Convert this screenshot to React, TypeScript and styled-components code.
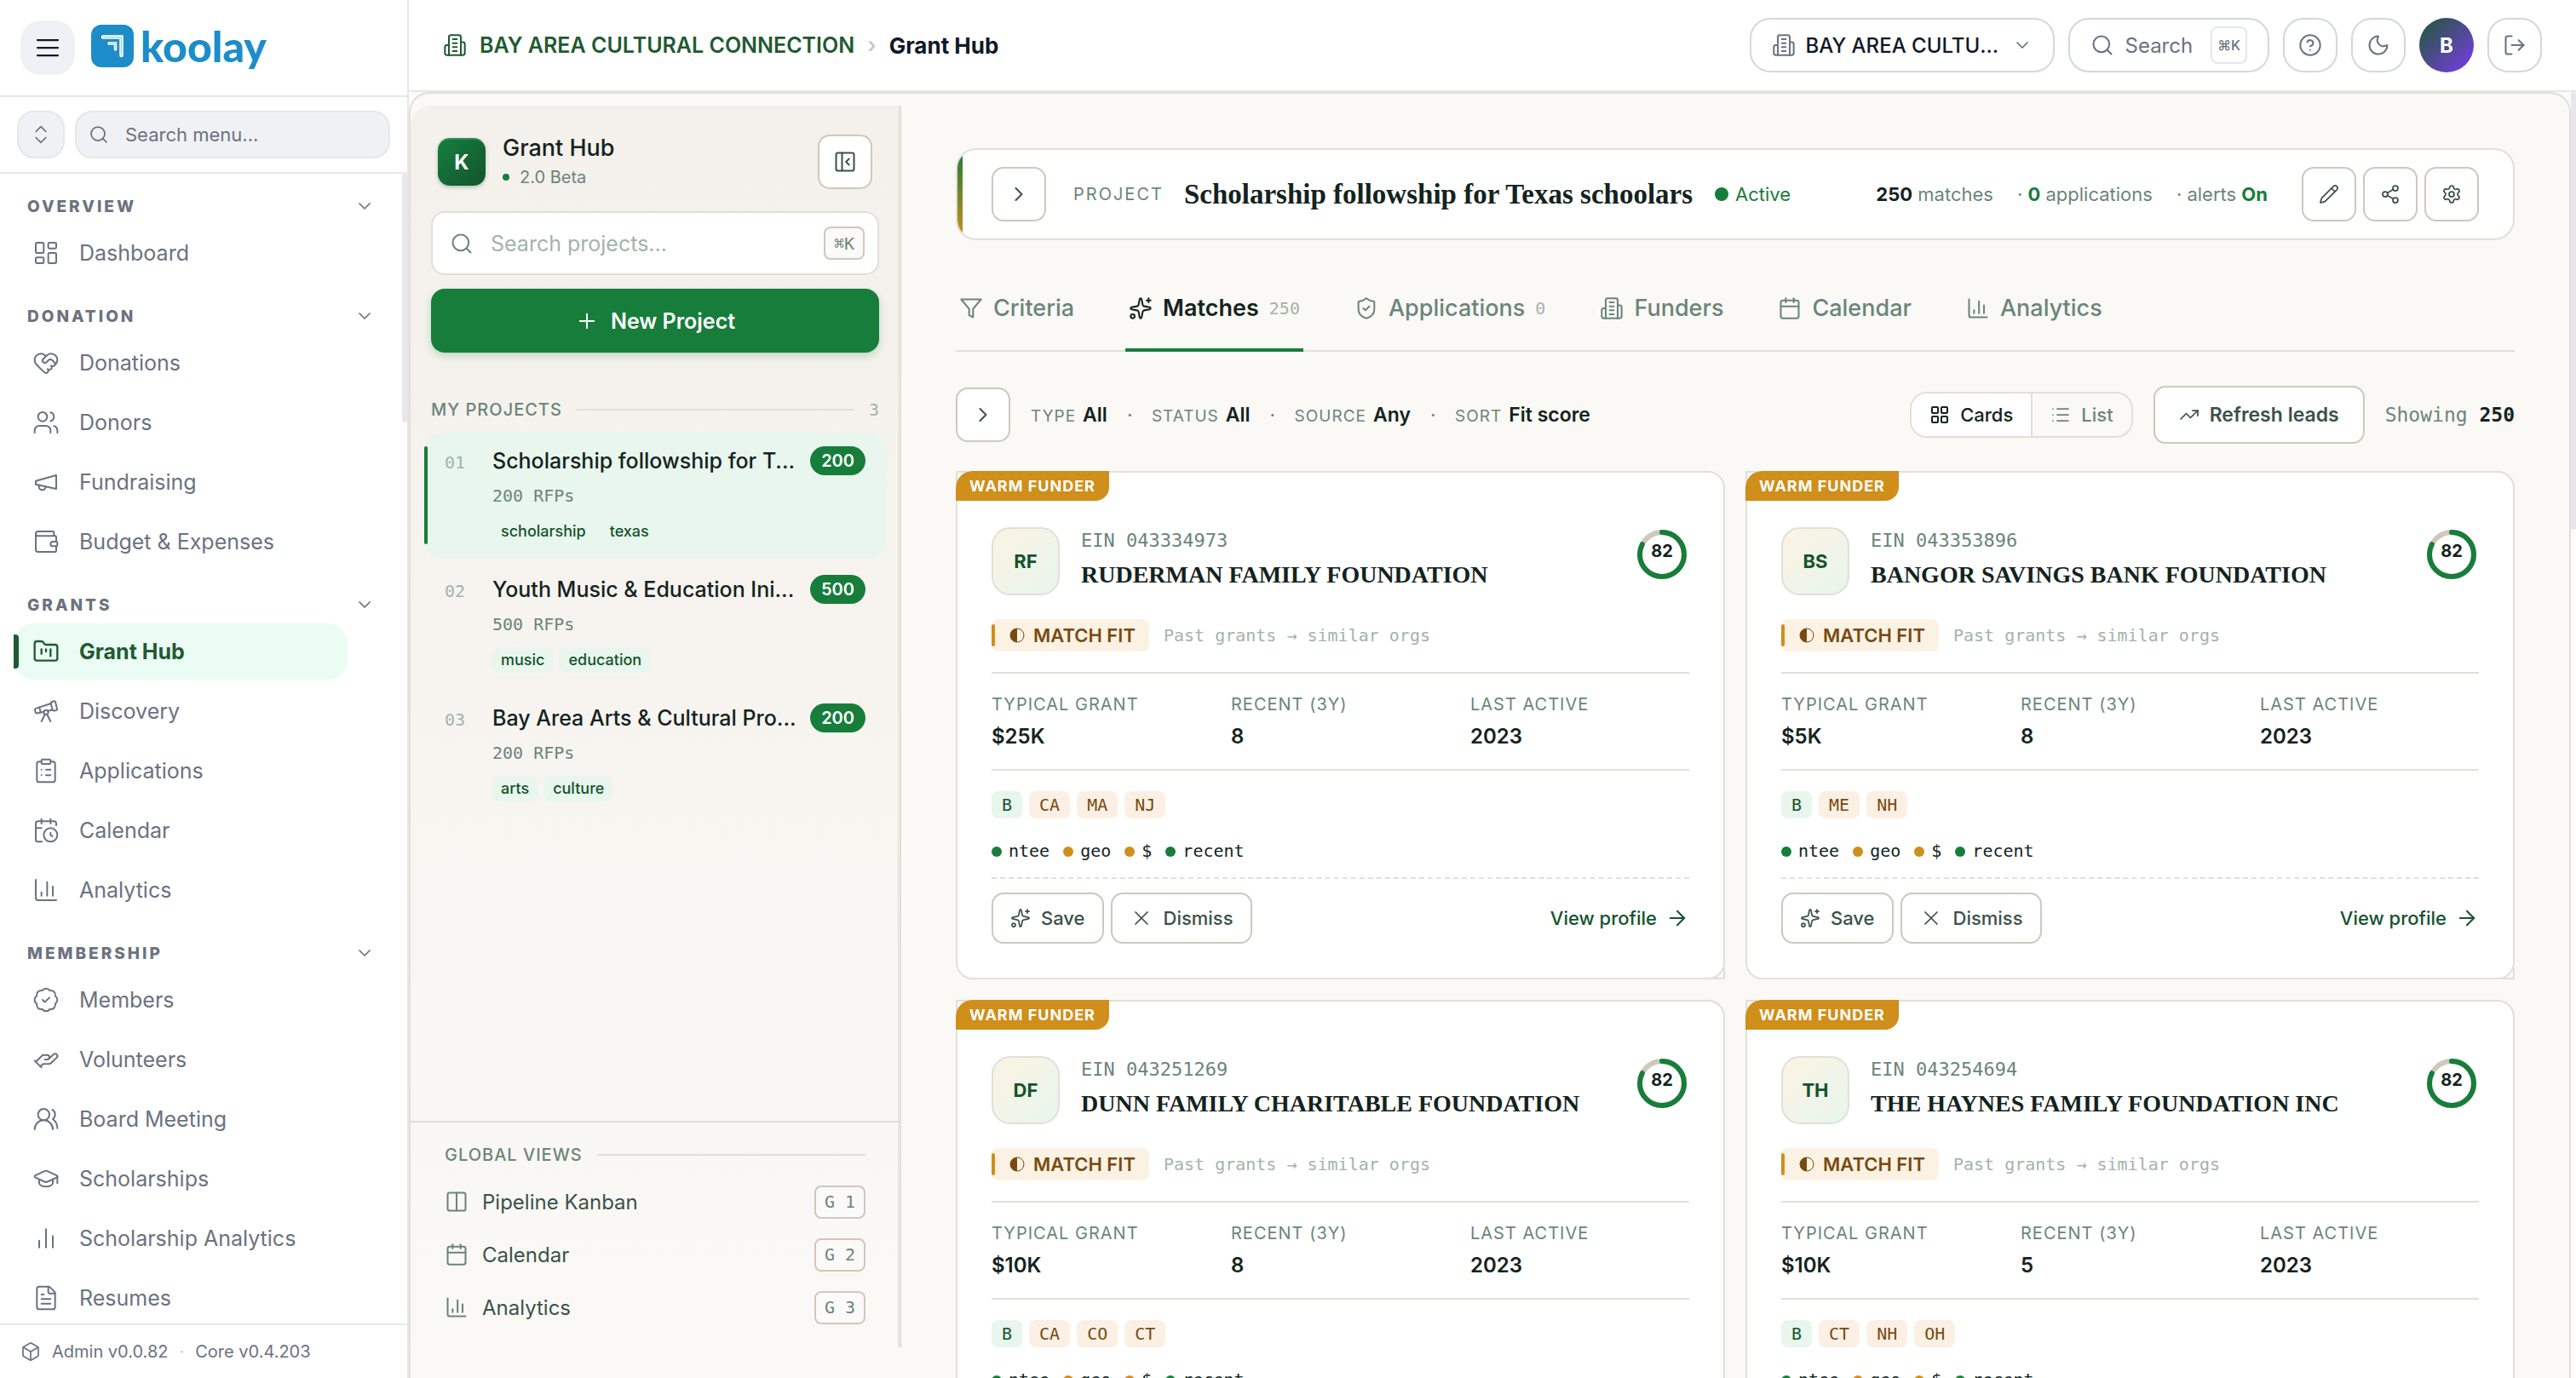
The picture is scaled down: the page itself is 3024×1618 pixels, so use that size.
import React from 'react';
import styled, { createGlobalStyle, css } from 'styled-components';
import {
  ChevronsUpDown, Search, ChevronDown, ChevronRight, LayoutDashboard, HeartHandshake, Users,
  Wallet, FolderKanban, Telescope, ClipboardList, CalendarClock, ChartColumn, BadgeCheck, HandHelping,
  UsersRound, GraduationCap, FileText, Box, CircleQuestionMark, Moon, LogOut,
  PanelLeftClose, Plus, Columns2, Calendar, Sparkles, ShieldCheck, LayoutGrid, List, TrendingUp,
  Pencil, Share2, Settings, X, ArrowRight,
} from 'lucide-react';

const c = {
  gray: '#6b7280',
  ink: '#111827',
  rule: '#e5e7eb',
  forest: '#14532d',
  brand: '#1f5a32',
  green: '#177d3b',
  mint: '#e8f6ed',
  text: '#14231d',
  body: '#3b5249',
  muted: '#6b857b',
  faint: '#a3b3ac',
  line: '#e2dfd8',
  edge: '#cfc8bd',
  paper: '#faf9f5',
  amber: '#d08e1b',
  cream: '#fcf2e4',
  brown: '#784a10',
};

const sans = `Inter, 'Liberation Sans', sans-serif`;
const mono = `'DejaVu Sans Mono', 'Liberation Mono', monospace`;
const serif = `'Liberation Serif', serif`;

const GlobalStyle = createGlobalStyle`
  *, *::before, *::after { box-sizing: border-box; }
  body { margin: 0; font-family: ${sans}; color: ${c.text}; background: ${c.paper}; }
  button, input, select { font: inherit; color: inherit; }
  button { cursor: pointer; padding: 0; background: none; border: 0; }
  a { color: inherit; text-decoration: none; }
  svg { flex: none; display: block; }
  h1, h2, h3, p, ul, ol, dl, dd { margin: 0; padding: 0; list-style: none; }
`;

/* ---------- icons that are drawn here ---------- */

type IconProps = { size?: number; strokeWidth?: number };

const Stroke = ({ size = 24, strokeWidth = 2, children }: IconProps & { children: React.ReactNode }) => (
  <svg width={size} height={size} viewBox="0 0 24 24" fill="none" stroke="currentColor"
    strokeWidth={strokeWidth} strokeLinecap="round" strokeLinejoin="round" aria-hidden="true">
    {children}
  </svg>
);

const Building = (p: IconProps) => (
  <Stroke {...p}>
    <path d="M6 22V4a2 2 0 0 1 2-2h8a2 2 0 0 1 2 2v18Z" />
    <path d="M6 12H4a2 2 0 0 0-2 2v6a2 2 0 0 0 2 2h2" />
    <path d="M18 9h2a2 2 0 0 1 2 2v9a2 2 0 0 1-2 2h-2" />
    <path d="M10 6h4M10 10h4M10 14h4M10 18h4" />
  </Stroke>
);

const Horn = (p: IconProps) => (
  <Stroke {...p}>
    <path d="m3 11 18-5v12L3 14v-3z" />
    <path d="M11.6 16.8a3 3 0 1 1-5.8-1.6" />
  </Stroke>
);

const Funnel = (p: IconProps) => (
  <Stroke {...p}>
    <polygon points="22 3 2 3 10 12.46 10 19 14 21 14 12.46 22 3" />
  </Stroke>
);

const Bars = (p: IconProps) => (
  <Stroke {...p}>
    <path d="M18 20V10M12 20V4M6 20v-6" />
  </Stroke>
);

const Burger = (p: IconProps) => (
  <Stroke {...p}>
    <path d="M4 6h16M4 12h16M4 18h16" />
  </Stroke>
);

const HalfMoon = () => (
  <svg width="18" height="18" viewBox="0 0 18 18" aria-hidden="true">
    <circle cx="9" cy="9" r="8" fill="none" stroke="currentColor" strokeWidth="1" />
    <path d="M9 1a8 8 0 0 0 0 16z" fill="currentColor" />
  </svg>
);

const LogoMark = () => (
  <svg width="50" height="50" viewBox="0 0 50 50" aria-hidden="true">
    <rect width="50" height="50" rx="12" fill="#1d8dc9" />
    <path d="M14 14.500H35.500V36" fill="none" stroke="#fff" strokeWidth="4.500" strokeLinecap="round" />
    <path d="M15 14.700H35.300V35" fill="none" stroke="#7fc0e4" strokeWidth="1" />
    <path d="M21 22H28.500V29" fill="none" stroke="#fff" strokeWidth="3.500" strokeLinecap="round" />
    <path d="M22 22H28.500V28.500" fill="none" stroke="#7fc0e4" strokeWidth="0.800" />
  </svg>
);

/* ---------- shell ---------- */

const Shell = styled.div`
  display: flex;
  height: 100vh;
  overflow: hidden;
`;

const Sidebar = styled.aside`
  flex: none;
  width: 480px;
  display: flex;
  flex-direction: column;
  background: #fff;
  border-right: 2px solid ${c.rule};
  color: ${c.gray};
`;

const Brand = styled.div`
  display: flex;
  align-items: center;
  height: 114px;
  padding: 0 24px;
  border-bottom: 2px solid ${c.rule};
`;

const MenuButton = styled.button`
  width: 64px;
  height: 64px;
  border-radius: 24px;
  background: #f0f1f5;
  color: ${c.ink};
  display: grid;
  place-items: center;
`;

const Logo = styled.a`
  display: flex;
  align-items: center;
  gap: 8px;
  margin-left: 19px;
  padding-bottom: 4px;
  font: 900 50px/56px Lato, sans-serif;
  color: #1d8dc9;
`;

const MenuSearchRow = styled.div`
  display: flex;
  gap: 12px;
  padding: 16px 20px;
  border-bottom: 2px solid ${c.rule};
`;

const ExpandButton = styled.button`
  flex: none;
  width: 56px;
  height: 56px;
  border: 2px solid ${c.rule};
  border-radius: 20px;
  background: #f0f1f5;
  display: grid;
  place-items: center;
`;

const MenuSearch = styled.label`
  flex: 1;
  min-width: 0;
  display: flex;
  align-items: center;
  gap: 19px;
  height: 56px;
  padding: 0 14px;
  border: 2px solid ${c.rule};
  border-radius: 20px;
  background: #f0f1f5;
`;

const BareInput = styled.input<{ $size: number; $hint: string }>`
  flex: 1;
  min-width: 0;
  border: 0;
  padding: 0;
  outline: 0;
  background: none;
  font-size: ${(p) => p.$size}px;
  &::placeholder { color: ${(p) => p.$hint}; opacity: 1; }
`;

const NavArea = styled.nav`
  position: relative;
  flex: 1;
  min-height: 0;
  overflow: hidden;
  padding: 18px 16px 0;
`;

const NavThumb = styled.span`
  position: absolute;
  top: 0;
  right: 0;
  width: 6px;
  height: 292px;
  border-radius: 3px;
  background: ${c.rule};
`;

const NavGroup = styled.section`
  & + & { margin-top: 21px; }
`;

const GroupToggle = styled.button`
  display: flex;
  align-items: center;
  justify-content: space-between;
  width: 100%;
  height: 40px;
  margin-bottom: 2px;
  padding: 0 22px 0 16px;
  font-size: 19px;
  font-weight: 800;
  letter-spacing: 3px;
`;

const NavList = styled.ul`
  display: grid;
  gap: 4px;
  padding-right: 54px;
`;

const NavLink = styled.a<{ $active?: boolean }>`
  display: flex;
  align-items: center;
  gap: 23px;
  height: 66px;
  padding-left: 22px;
  font-size: 25px;
  white-space: nowrap;
  ${(p) => p.$active && css`
    position: relative;
    border-radius: 24px;
    background: #eafcf4;
    color: ${c.brand};
    font-weight: 700;
    &::before {
      content: '';
      position: absolute;
      left: 0;
      top: 13px;
      bottom: 13px;
      width: 6px;
      border-radius: 0 4px 4px 0;
      background: ${c.brand};
    }
  `}
`;

const SideFooter = styled.footer`
  display: flex;
  align-items: center;
  gap: 13px;
  height: 64px;
  padding: 0 24px;
  border-top: 2px solid ${c.rule};
  font-size: 20px;
`;

const Soft = styled.span`
  color: #c3c8d0;
`;

const Page = styled.div`
  flex: 1;
  min-width: 0;
  display: flex;
  flex-direction: column;
`;

/* ---------- top bar ---------- */

const TopBar = styled.header`
  flex: none;
  display: flex;
  align-items: center;
  justify-content: space-between;
  height: 108px;
  padding: 0 40px;
  background: #fff;
  border-bottom: 2px solid ${c.rule};
`;

const Crumbs = styled.nav`
  display: flex;
  align-items: center;
  gap: 15px;
  font-size: 25px;
  font-weight: 600;
  color: ${c.brand};
`;

const CrumbHere = styled.span`
  font-size: 26px;
  font-weight: 700;
  color: ${c.ink};
`;

const TopActions = styled.div`
  display: flex;
  align-items: center;
  gap: 16px;
  color: ${c.gray};
`;

const pill = css`
  display: flex;
  align-items: center;
  height: 64px;
  border: 2px solid #d3d7e2;
  border-radius: 24px;
  background: #fff;
`;

const OrgPicker = styled.label`
  ${pill}
  padding: 0 24px;
  gap: 12px;
`;

const OrgSelect = styled.select`
  appearance: none;
  width: 230px;
  padding: 0;
  border: 0;
  background: none;
  color: ${c.ink};
  font-size: 24px;
  font-weight: 500;
  overflow: hidden;
  text-overflow: ellipsis;
  white-space: nowrap;
`;

const SearchButton = styled.button`
  ${pill}
  padding: 0 24px;
  gap: 13px;
  font-size: 24px;
`;

const Keys = styled.kbd<{ $tone: 'cool' | 'warm' }>`
  display: grid;
  place-items: center;
  border-radius: 8px;
  white-space: pre;
  ${(p) => p.$tone === 'cool'
    ? css`height: 44px; margin-left: 8px; padding: 0 6px; border: 2px solid ${c.rule}; font: 500 16px ${sans};`
    : css`height: 39px; padding: 0 10px; border: 2px solid ${c.edge}; font: 20px ${mono}; color: ${c.muted}; background: #fcfaf8;`}
`;

const RoundButton = styled.button`
  ${pill}
  width: 64px;
  justify-content: center;
`;

const Avatar = styled.button`
  width: 64px;
  height: 64px;
  border-radius: 50%;
  background: linear-gradient(135deg, #1f5a32, #7c3aed);
  color: #fff;
  font-size: 24px;
  font-weight: 700;
`;

/* ---------- framed workspace ---------- */

const Workspace = styled.div`
  flex: 1;
  min-height: 0;
  display: flex;
  background: #fbfbf9;
`;

const Frame = styled.div`
  flex: 1;
  min-width: 0;
  display: flex;
  overflow: hidden;
  border: 2px solid ${c.line};
  border-bottom: 0;
  border-radius: 24px 24px 0 0;
  background: ${c.paper};
`;

const PageThumb = styled.div`
  width: 6px;
  height: 514px;
  border-radius: 3px;
  background: ${c.rule};
`;

const Panel = styled.aside`
  flex: none;
  width: 576px;
  margin: 14px 0 36px;
  display: flex;
  flex-direction: column;
  justify-content: space-between;
  border-right: 2px solid ${c.line};
  border-radius: 24px 0 0 0;
  box-shadow: inset -2px 0 0 #ebe8e2;
  background: linear-gradient(180deg, #f4f0eb, ${c.paper});
`;

const PanelTop = styled.div`
  padding: 34px 24px 0;
`;

const PanelHead = styled.div`
  display: flex;
  align-items: center;
  gap: 20px;
  padding: 0 8px;
`;

const KBadge = styled.span`
  display: grid;
  place-items: center;
  width: 56px;
  height: 56px;
  border-radius: 14px;
  background: linear-gradient(135deg, #15803d, #14532d);
  box-shadow: inset 0 2px 0 rgba(255, 255, 255, 0.15), 0 2px 4px rgba(20, 83, 45, 0.3);
  color: #fff;
  font-size: 24px;
  font-weight: 700;
`;

const PanelTitle = styled.h2`
  font-size: 27px;
  line-height: 32px;
  font-weight: 500;
`;

const Beta = styled.p`
  display: flex;
  align-items: center;
  gap: 12px;
  margin-top: 4px;
  font-size: 20px;
  line-height: 28px;
  color: ${c.muted};
`;

const Dot = styled.i<{ $size: number; $amber?: boolean }>`
  flex: none;
  width: ${(p) => p.$size}px;
  height: ${(p) => p.$size}px;
  border-radius: 50%;
  background: ${(p) => (p.$amber ? c.amber : c.green)};
`;

const SquareButton = styled.button<{ $end?: boolean }>`
  flex: none;
  display: grid;
  place-items: center;
  width: 64px;
  height: 64px;
  border: 2px solid ${c.edge};
  border-radius: 14px;
  background: #fff;
  color: ${c.body};
  ${(p) => p.$end && css`margin-left: auto;`}
`;

const ProjectSearch = styled.label`
  display: flex;
  align-items: center;
  gap: 20px;
  height: 75px;
  margin-top: 26px;
  padding: 0 15px 0 20px;
  border: 2px solid ${c.line};
  border-radius: 16px;
  background: #fff;
  color: ${c.muted};
`;

const NewProject = styled.button`
  display: flex;
  align-items: center;
  justify-content: center;
  gap: 14px;
  width: 100%;
  height: 75px;
  margin-top: 16px;
  border-radius: 16px;
  background: ${c.green};
  box-shadow: 0 4px 10px rgba(21, 128, 61, 0.25);
  color: #fff;
  font-size: 25px;
  font-weight: 600;
`;

const Caption = styled.h3<{ $top?: boolean }>`
  display: flex;
  align-items: center;
  gap: 17px;
  font-size: 20px;
  line-height: 28px;
  font-weight: 500;
  letter-spacing: 1px;
  color: ${c.muted};
  ${(p) => p.$top && css`margin: 53px 0 13px;`}
  &::after {
    content: '';
    order: 1;
    flex: 1;
    height: 2px;
    background: ${c.line};
  }
`;

const Count = styled.span`
  order: 2;
  font: 20px/28px ${mono};
  letter-spacing: 0;
  color: ${c.faint};
`;

const ProjectList = styled.ol`
  display: grid;
  gap: 4px;
  margin: 0 -8px;
`;

const ProjectRow = styled.li<{ $active?: boolean }>`
  display: grid;
  grid-template-columns: 56px minmax(0, 1fr);
  padding: 16px 24px;
  border-radius: 20px;
  ${(p) => p.$active && css`
    position: relative;
    background: ${c.mint};
    &::before {
      content: '';
      position: absolute;
      left: 0;
      top: 16px;
      bottom: 16px;
      width: 4px;
      border-radius: 2px;
      background: ${c.green};
    }
  `}
`;

const Index = styled.span`
  font: 20px/38px ${mono};
  color: ${c.faint};
`;

const RowHead = styled.div`
  display: flex;
  align-items: center;
  justify-content: space-between;
`;

const RowTitle = styled.a`
  white-space: nowrap;
  font-size: 25px;
  line-height: 34px;
  font-weight: 500;
`;

const CountPill = styled.span`
  padding: 0 13px;
  border-radius: 17px;
  background: ${c.green};
  color: #fff;
  font-size: 20px;
  line-height: 34px;
  font-weight: 600;
`;

const RowMeta = styled.p`
  margin: 10px 0 13px;
  font: 20px/28px ${mono};
  color: ${c.muted};
`;

const TopicTags = styled.div`
  display: flex;
  gap: 8px;
`;

const TopicTag = styled.span`
  padding: 0 10px;
  border-radius: 8px;
  background: ${c.mint};
  color: ${c.forest};
  font-size: 18px;
  line-height: 30px;
  font-weight: 500;
`;

const GlobalViews = styled.nav`
  padding: 24px 40px 16px;
  border-top: 2px solid ${c.line};
`;

const ViewList = styled.ul`
  margin-top: 10px;
`;

const ViewLink = styled.a`
  display: flex;
  align-items: center;
  gap: 16px;
  height: 62px;
  font-size: 24px;
  color: ${c.body};
  svg { color: ${c.muted}; }
  kbd { margin-left: auto; }
`;

/* ---------- main column ---------- */

const Main = styled.main`
  flex: 1;
  min-width: 0;
  padding: 64px 64px 0;
`;

const ProjectBar = styled.section`
  position: relative;
  display: flex;
  align-items: center;
  height: 108px;
  padding: 0 40px;
  overflow: hidden;
  border: 2px solid ${c.line};
  border-radius: 24px;
  background: #fff;
  &::before {
    content: '';
    position: absolute;
    inset: 0 auto 0 0;
    width: 6px;
    background: linear-gradient(180deg, ${c.green}, ${c.amber});
  }
`;

const Kicker = styled.span`
  margin: 0 24px 0 32px;
  font-size: 20px;
  letter-spacing: 2px;
  color: ${c.muted};
`;

const ProjectTitle = styled.h1`
  font: 700 33px/40px ${serif};
`;

const Status = styled.span`
  display: flex;
  align-items: center;
  gap: 8px;
  margin-left: 26px;
  font-size: 22px;
  color: ${c.green};
`;

const Facts = styled.p`
  display: flex;
  gap: 28px;
  margin-left: auto;
  font-size: 22px;
  color: ${c.muted};
`;

const Strong = styled.strong<{ $green?: boolean }>`
  font-weight: 700;
  color: ${(p) => (p.$green ? c.green : c.text)};
`;

const ButtonSet = styled.div`
  display: flex;
  gap: 8px;
  margin-left: 40px;
`;

const Tabs = styled.nav`
  display: flex;
  gap: 56px;
  margin-top: 28px;
  border-bottom: 2px solid ${c.line};
`;

const Tab = styled.a<{ $active?: boolean }>`
  display: flex;
  align-items: center;
  gap: 12px;
  height: 103px;
  margin-bottom: -2px;
  padding: 4px 4px 0;
  border-bottom: 4px solid ${(p) => (p.$active ? c.green : 'transparent')};
  font-size: 27px;
  font-weight: ${(p) => (p.$active ? 600 : 500)};
  color: ${(p) => (p.$active ? c.text : c.muted)};
`;

const TabCount = styled.span`
  font: 20px ${mono};
  color: ${c.faint};
`;

const FilterRow = styled.div`
  display: flex;
  align-items: center;
  height: 68px;
  margin-top: 40px;
`;

const Filters = styled.dl`
  display: flex;
  gap: 52px;
  margin-left: 24px;
`;

const FilterItem = styled.div`
  position: relative;
  display: flex;
  align-items: baseline;
  gap: 8px;
  font-size: 23px;
  & + &::before {
    content: '·';
    position: absolute;
    left: -29px;
    color: ${c.muted};
  }
  dt { font-size: 19px; letter-spacing: 1px; color: ${c.muted}; }
  dd { font-weight: 600; }
`;

const ViewSwitch = styled.div`
  display: flex;
  height: 54px;
  margin-left: auto;
  overflow: hidden;
  border: 2px solid ${c.line};
  border-radius: 20px;
`;

const SwitchButton = styled.button<{ $on?: boolean }>`
  display: flex;
  align-items: center;
  gap: 12px;
  padding: 0 21px;
  font-size: 22px;
  font-weight: 500;
  color: ${(p) => (p.$on ? c.text : c.muted)};
  ${(p) => p.$on && css`background: #fff; border-right: 2px solid ${c.line};`}
`;

const Refresh = styled.button`
  display: flex;
  align-items: center;
  gap: 12px;
  height: 68px;
  margin: 0 24px;
  padding: 0 28px;
  border: 2px solid ${c.edge};
  border-radius: 14px;
  background: #fff;
  color: ${c.body};
  font-size: 23px;
  font-weight: 600;
`;

const Showing = styled.p`
  font: 23px ${mono};
  color: ${c.muted};
`;

const Grid = styled.div`
  display: grid;
  grid-template-columns: repeat(2, minmax(0, 1fr));
  gap: 24px;
  margin-top: 32px;
`;

/* ---------- funder card ---------- */

const Card = styled.article`
  position: relative;
  z-index: 0;
  padding: 64px 40px 40px;
  border: 2px solid ${c.line};
  border-radius: 20px;
  background: #fff;
  &::before, &::after {
    content: '';
    position: absolute;
    z-index: -1;
    width: 14px;
    height: 14px;
    border: 0 solid ${c.line};
  }
  &::before { left: -2px; top: -2px; border-width: 2px 0 0 2px; }
  &::after { right: -2px; bottom: -2px; border-width: 0 2px 2px 0; }
`;

const Ribbon = styled.span`
  position: absolute;
  left: -2px;
  top: -2px;
  padding: 0 16px;
  border-radius: 20px 0 16px 0;
  background: ${c.amber};
  color: #fff;
  font-size: 18px;
  line-height: 35px;
  font-weight: 700;
  letter-spacing: 1px;
`;

const CardHead = styled.header`
  display: flex;
  gap: 25px;
`;

const Monogram = styled.span`
  flex: none;
  display: grid;
  place-items: center;
  width: 80px;
  height: 80px;
  border: 2px solid ${c.line};
  border-radius: 22px;
  background: linear-gradient(135deg, #fbf3e3, #e8f6ed);
  color: ${c.forest};
  font-size: 22px;
  font-weight: 700;
`;

const Identity = styled.div`
  flex: 1;
  min-width: 0;
`;

const Ein = styled.p`
  font: 22px/32px ${mono};
  color: ${c.muted};
`;

const FunderName = styled.h2`
  margin-top: 4px;
  font: 700 28px/40px ${serif};
`;

const Score = styled.div`
  display: grid;
  flex: none;
  width: 64px;
  height: 64px;
  > * { grid-area: 1 / 1; }
`;

const ScoreValue = styled.span`
  text-align: center;
  font-size: 20px;
  line-height: 56px;
  font-weight: 700;
`;

const FitRow = styled.div`
  display: flex;
  align-items: center;
  gap: 17px;
  margin: 28px 0 24px;
`;

const FitTag = styled.span`
  position: relative;
  display: flex;
  align-items: center;
  gap: 10px;
  height: 38px;
  padding: 0 16px 0 21px;
  border-radius: 8px;
  background: ${c.cream};
  color: ${c.brown};
  font-size: 22px;
  font-weight: 600;
  &::before {
    content: '';
    position: absolute;
    left: 0;
    top: 6px;
    bottom: 6px;
    width: 4px;
    border-radius: 2px;
    background: ${c.amber};
  }
`;

const FitNote = styled.span`
  font: 20px ${mono};
  color: ${c.faint};
`;

const Stats = styled.dl`
  display: grid;
  grid-template-columns: repeat(3, minmax(0, 1fr));
  column-gap: 24px;
  padding: 22px 0 20px;
  border: solid ${c.line};
  border-width: 2px 0;
  dt { font-size: 20px; line-height: 28px; letter-spacing: 1px; color: ${c.muted}; }
  dd { margin-top: 6px; font-size: 24px; line-height: 36px; font-weight: 600; }
`;

const Codes = styled.div`
  display: flex;
  gap: 8px;
  margin: 24px 0;
`;

const Code = styled.span<{ $green?: boolean }>`
  padding: 0 12px;
  border-radius: 8px;
  background: ${(p) => (p.$green ? c.mint : '#fcf0e4')};
  color: ${(p) => (p.$green ? c.forest : c.brown)};
  font: 20px/32px ${mono};
`;

const Signals = styled.ul`
  display: flex;
  gap: 16px;
  padding-bottom: 16px;
  border-bottom: 2px dashed ${c.line};
  font: 20px/29px ${mono};
  li { display: flex; align-items: center; gap: 8px; }
`;

const Actions = styled.footer`
  display: flex;
  align-items: center;
  gap: 8px;
  padding-top: 16px;
`;

const ActionButton = styled.button`
  display: flex;
  align-items: center;
  gap: 12px;
  height: 60px;
  padding: 0 20px;
  border: 2px solid ${c.edge};
  border-radius: 14px;
  background: #fff;
  color: ${c.body};
  font-size: 22px;
  font-weight: 500;
`;

const ProfileLink = styled.a`
  display: flex;
  align-items: center;
  gap: 10px;
  margin-left: auto;
  color: ${c.forest};
  font-size: 22px;
  font-weight: 500;
`;

/* ---------- data ---------- */

type NavEntry = { label: string; icon: React.ElementType; active?: boolean };

const groups: { title: string; items: NavEntry[] }[] = [
  { title: 'OVERVIEW', items: [{ label: 'Dashboard', icon: LayoutDashboard }] },
  {
    title: 'DONATION',
    items: [
      { label: 'Donations', icon: HeartHandshake },
      { label: 'Donors', icon: Users },
      { label: 'Fundraising', icon: Horn },
      { label: 'Budget & Expenses', icon: Wallet },
    ],
  },
  {
    title: 'GRANTS',
    items: [
      { label: 'Grant Hub', icon: FolderKanban, active: true },
      { label: 'Discovery', icon: Telescope },
      { label: 'Applications', icon: ClipboardList },
      { label: 'Calendar', icon: CalendarClock },
      { label: 'Analytics', icon: ChartColumn },
    ],
  },
  {
    title: 'MEMBERSHIP',
    items: [
      { label: 'Members', icon: BadgeCheck },
      { label: 'Volunteers', icon: HandHelping },
      { label: 'Board Meeting', icon: UsersRound },
      { label: 'Scholarships', icon: GraduationCap },
      { label: 'Scholarship Analytics', icon: Bars },
      { label: 'Resumes', icon: FileText },
    ],
  },
];

const projects = [
  { title: 'Scholarship followship for T...', count: 200, tags: ['scholarship', 'texas'], active: true },
  { title: 'Youth Music & Education Ini...', count: 500, tags: ['music', 'education'] },
  { title: 'Bay Area Arts & Cultural Pro...', count: 200, tags: ['arts', 'culture'] },
];

const views = [
  { label: 'Pipeline Kanban', icon: Columns2, keys: 'G 1' },
  { label: 'Calendar', icon: Calendar, keys: 'G 2' },
  { label: 'Analytics', icon: ChartColumn, keys: 'G 3' },
];

const tabs = [
  { label: 'Criteria', icon: Funnel },
  { label: 'Matches', icon: Sparkles, count: 250, active: true },
  { label: 'Applications', icon: ShieldCheck, count: 0 },
  { label: 'Funders', icon: Building },
  { label: 'Calendar', icon: Calendar },
  { label: 'Analytics', icon: ChartColumn },
];

const filters = [['TYPE', 'All'], ['STATUS', 'All'], ['SOURCE', 'Any'], ['SORT', 'Fit score']];

const funders = [
  { mono: 'RF', ein: '043334973', name: 'RUDERMAN FAMILY FOUNDATION', grant: '$25K', recent: 8, states: ['CA', 'MA', 'NJ'] },
  { mono: 'BS', ein: '043353896', name: 'BANGOR SAVINGS BANK FOUNDATION', grant: '$5K', recent: 8, states: ['ME', 'NH'] },
  { mono: 'DF', ein: '043251269', name: 'DUNN FAMILY CHARITABLE FOUNDATION', grant: '$10K', recent: 8, states: ['CA', 'CO', 'CT'] },
  { mono: 'TH', ein: '043254694', name: 'THE HAYNES FAMILY FOUNDATION INC', grant: '$10K', recent: 5, states: ['CT', 'NH', 'OH'] },
];

const signals = [
  { label: 'ntee' },
  { label: 'geo', amber: true },
  { label: '$', amber: true },
  { label: 'recent' },
];

/* ---------- parts ---------- */

const ScoreRing = ({ value }: { value: number }) => {
  const length = 2 * Math.PI * 26;
  return (
    <Score>
      <svg width="64" height="64" viewBox="0 0 64 64" fill="none" strokeWidth="6" aria-hidden="true">
        <circle cx="32" cy="32" r="26" stroke={c.edge} />
        <circle cx="32" cy="32" r="26" stroke={c.green} strokeLinecap="round"
          strokeDasharray={`${(length * value) / 100} ${length}`} transform="rotate(-90 32 32)" />
      </svg>
      <ScoreValue>{value}</ScoreValue>
    </Score>
  );
};

const FunderCard = ({ funder }: { funder: (typeof funders)[number] }) => (
  <Card>
    <Ribbon>WARM FUNDER</Ribbon>
    <CardHead>
      <Monogram>{funder.mono}</Monogram>
      <Identity>
        <Ein>EIN {funder.ein}</Ein>
        <FunderName>{funder.name}</FunderName>
      </Identity>
      <ScoreRing value={82} />
    </CardHead>
    <FitRow>
      <FitTag><HalfMoon />MATCH FIT</FitTag>
      <FitNote>Past grants → similar orgs</FitNote>
    </FitRow>
    <Stats>
      <div><dt>TYPICAL GRANT</dt><dd>{funder.grant}</dd></div>
      <div><dt>RECENT (3Y)</dt><dd>{funder.recent}</dd></div>
      <div><dt>LAST ACTIVE</dt><dd>2023</dd></div>
    </Stats>
    <Codes>
      <Code $green>B</Code>
      {funder.states.map((s) => <Code key={s}>{s}</Code>)}
    </Codes>
    <Signals>
      {signals.map((s) => <li key={s.label}><Dot $size={12} $amber={s.amber} />{s.label}</li>)}
    </Signals>
    <Actions>
      <ActionButton type="button"><Sparkles size={24} strokeWidth={1.75} />Save</ActionButton>
      <ActionButton type="button"><X size={28} strokeWidth={1.5} />Dismiss</ActionButton>
      <ProfileLink href="#profile">View profile<ArrowRight size={28} strokeWidth={1.75} /></ProfileLink>
    </Actions>
  </Card>
);

export default function App() {
  return (
    <>
      <GlobalStyle />
      <Shell>
        <Sidebar>
          <Brand>
            <MenuButton type="button" aria-label="Toggle menu"><Burger size={36} strokeWidth={1.5} /></MenuButton>
            <Logo href="#home"><LogoMark />koolay</Logo>
          </Brand>
          <MenuSearchRow>
            <ExpandButton type="button" aria-label="Expand all"><ChevronsUpDown size={28} strokeWidth={1.5} /></ExpandButton>
            <MenuSearch>
              <Search size={24} strokeWidth={1.75} />
              <BareInput type="search" aria-label="Search menu" placeholder="Search menu..." $size={22} $hint={c.gray} />
            </MenuSearch>
          </MenuSearchRow>
          <NavArea aria-label="Main">
            {groups.map((g) => (
              <NavGroup key={g.title}>
                <GroupToggle type="button">{g.title}<ChevronDown size={24} strokeWidth={1.75} /></GroupToggle>
                <NavList>
                  {g.items.map(({ label, icon: Icon, active }) => (
                    <li key={label}>
                      <NavLink href="#nav" $active={active}>
                        <Icon size={32} strokeWidth={active ? 1.75 : 1.5} />{label}
                      </NavLink>
                    </li>
                  ))}
                </NavList>
              </NavGroup>
            ))}
            <NavThumb />
          </NavArea>
          <SideFooter>
            <Box size={24} strokeWidth={1.75} />
            <span>Admin v0.0.82</span><Soft>·</Soft><span>Core v0.4.203</span>
          </SideFooter>
        </Sidebar>

        <Page>
          <TopBar>
            <Crumbs aria-label="Breadcrumb">
              <Building size={28} strokeWidth={1.75} />
              <a href="#org">BAY AREA CULTURAL CONNECTION</a>
              <Soft>›</Soft>
              <CrumbHere>Grant Hub</CrumbHere>
            </Crumbs>
            <TopActions>
              <OrgPicker>
                <Building size={28} strokeWidth={1.75} />
                <OrgSelect aria-label="Organization" defaultValue="bacc">
                  <option value="bacc">BAY AREA CULTURAL CONNECTION</option>
                </OrgSelect>
                <ChevronDown size={24} strokeWidth={1.75} />
              </OrgPicker>
              <SearchButton type="button">
                <Search size={28} strokeWidth={1.75} />Search<Keys $tone="cool">⌘K</Keys>
              </SearchButton>
              <RoundButton type="button" aria-label="Help"><CircleQuestionMark size={28} strokeWidth={1.75} /></RoundButton>
              <RoundButton type="button" aria-label="Dark mode"><Moon size={28} strokeWidth={1.75} /></RoundButton>
              <Avatar type="button">B</Avatar>
              <RoundButton type="button" aria-label="Log out"><LogOut size={28} strokeWidth={1.75} /></RoundButton>
            </TopActions>
          </TopBar>

          <Workspace>
            <Frame>
              <Panel>
                <PanelTop>
                  <PanelHead>
                    <KBadge>K</KBadge>
                    <div>
                      <PanelTitle>Grant Hub</PanelTitle>
                      <Beta><Dot $size={8} />2.0 Beta</Beta>
                    </div>
                    <SquareButton type="button" aria-label="Collapse panel" $end>
                      <PanelLeftClose size={28} strokeWidth={1.75} />
                    </SquareButton>
                  </PanelHead>
                  <ProjectSearch>
                    <Search size={28} strokeWidth={1.75} />
                    <BareInput type="search" aria-label="Search projects" placeholder="Search projects..." $size={25} $hint={c.faint} />
                    <Keys $tone="warm">⌘K</Keys>
                  </ProjectSearch>
                  <NewProject type="button"><Plus size={28} strokeWidth={1.75} />New Project</NewProject>
                  <Caption $top>MY PROJECTS<Count>3</Count></Caption>
                  <ProjectList>
                    {projects.map((p, i) => (
                      <ProjectRow key={p.title} $active={p.active}>
                        <Index>0{i + 1}</Index>
                        <div>
                          <RowHead>
                            <RowTitle href="#project">{p.title}</RowTitle>
                            <CountPill>{p.count}</CountPill>
                          </RowHead>
                          <RowMeta>{p.count} RFPs</RowMeta>
                          <TopicTags>{p.tags.map((t) => <TopicTag key={t}>{t}</TopicTag>)}</TopicTags>
                        </div>
                      </ProjectRow>
                    ))}
                  </ProjectList>
                </PanelTop>
                <GlobalViews aria-label="Global views">
                  <Caption>GLOBAL VIEWS</Caption>
                  <ViewList>
                    {views.map(({ label, icon: Icon, keys }) => (
                      <li key={label}>
                        <ViewLink href="#view"><Icon size={28} strokeWidth={1.75} />{label}<Keys $tone="warm">{keys}</Keys></ViewLink>
                      </li>
                    ))}
                  </ViewList>
                </GlobalViews>
              </Panel>

              <Main>
                <ProjectBar>
                  <SquareButton type="button" aria-label="Expand project"><ChevronRight size={28} strokeWidth={1.75} /></SquareButton>
                  <Kicker>PROJECT</Kicker>
                  <ProjectTitle>Scholarship followship for Texas schoolars</ProjectTitle>
                  <Status><Dot $size={16} />Active</Status>
                  <Facts>
                    <span><Strong>250</Strong> matches</span>
                    <span>· <Strong $green>0</Strong> applications</span>
                    <span>· alerts <Strong $green>On</Strong></span>
                  </Facts>
                  <ButtonSet>
                    <SquareButton type="button" aria-label="Edit"><Pencil size={24} strokeWidth={1.75} /></SquareButton>
                    <SquareButton type="button" aria-label="Share"><Share2 size={24} strokeWidth={1.75} /></SquareButton>
                    <SquareButton type="button" aria-label="Settings"><Settings size={24} strokeWidth={1.75} /></SquareButton>
                  </ButtonSet>
                </ProjectBar>

                <Tabs aria-label="Project sections">
                  {tabs.map(({ label, icon: Icon, count, active }) => (
                    <Tab key={label} href="#tab" $active={active}>
                      <Icon size={28} strokeWidth={1.75} />{label}
                      {count !== undefined && <TabCount>{count}</TabCount>}
                    </Tab>
                  ))}
                </Tabs>

                <FilterRow>
                  <SquareButton type="button" aria-label="Show filters"><ChevronRight size={28} strokeWidth={1.75} /></SquareButton>
                  <Filters>
                    {filters.map(([k, v]) => <FilterItem key={k}><dt>{k}</dt><dd>{v}</dd></FilterItem>)}
                  </Filters>
                  <ViewSwitch>
                    <SwitchButton type="button" $on><LayoutGrid size={24} strokeWidth={2} />Cards</SwitchButton>
                    <SwitchButton type="button"><List size={24} strokeWidth={1.75} />List</SwitchButton>
                  </ViewSwitch>
                  <Refresh type="button"><TrendingUp size={24} strokeWidth={1.75} />Refresh leads</Refresh>
                  <Showing>Showing <Strong>250</Strong></Showing>
                </FilterRow>

                <Grid>
                  {funders.map((f) => <FunderCard key={f.ein} funder={f} />)}
                </Grid>
              </Main>
            </Frame>
            <PageThumb />
          </Workspace>
        </Page>
      </Shell>
    </>
  );
}
